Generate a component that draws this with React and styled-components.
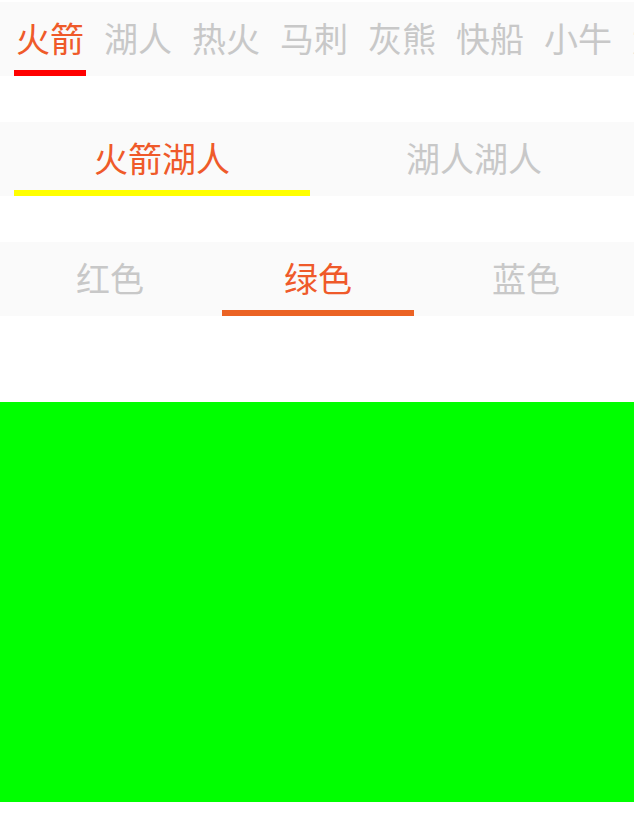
import { useState } from "react";
import styled, { createGlobalStyle } from "styled-components";

const GlobalStyle = createGlobalStyle`
  body {
    margin: 0;
    background: #ffffff;
    font-family: "Noto Sans CJK SC", "Noto Sans", sans-serif;
  }
`;

const teams = ["火箭", "湖人", "热火", "马刺", "灰熊", "快船", "小牛", "太阳"];
const pairs = ["火箭湖人", "湖人湖人"];
const colors = [
  { name: "红色", value: "#ff0000" },
  { name: "绿色", value: "#00ff00" },
  { name: "蓝色", value: "#0000ff" },
];

const Page = styled.div`
  display: flex;
  flex-direction: column;
  gap: 46px;
  padding-top: 2px;
  width: 634px;
  overflow: hidden;
`;

const TabBar = styled.div`
  display: flex;
  height: 74px;
  background: #fafafa;
  padding: 0 4px 0 6px;
  overflow: hidden;
  white-space: nowrap;
`;

const Tab = styled.div`
  flex: ${({ $scroll }) => ($scroll ? "0 0 auto" : "1 1 0")};
  display: flex;
  flex-direction: column;
  cursor: pointer;
`;

const Label = styled.div`
  flex: 1;
  display: flex;
  align-items: center;
  justify-content: center;
  padding: ${({ $scroll }) => ($scroll ? "4px 10px 0" : "4px 0 0")};
  font-size: 34px;
  line-height: 1;
  color: ${({ $active }) => ($active ? "#ef5a2a" : "#c8c8c8")};
`;

const Underline = styled.div`
  height: 6px;
  margin: 0 8px;
  background: ${({ $color }) => $color || "transparent"};
`;

const Swatch = styled.div`
  height: 400px;
  margin-top: 40px;
  background: ${({ $color }) => $color};
`;

export default function App() {
  const [team, setTeam] = useState(0);
  const [pair, setPair] = useState(0);
  const [color, setColor] = useState(1);

  return (
    <>
      <GlobalStyle />
      <Page>
        <TabBar>
          {teams.map((t, i) => (
            <Tab key={t} $scroll onClick={() => setTeam(i)}>
              <Label $scroll $active={i === team}>{t}</Label>
              <Underline $color={i === team ? "#ff0000" : null} />
            </Tab>
          ))}
        </TabBar>

        <TabBar>
          {pairs.map((p, i) => (
            <Tab key={i} onClick={() => setPair(i)}>
              <Label $active={i === pair}>{p}</Label>
              <Underline $color={i === pair ? "#ffff00" : null} />
            </Tab>
          ))}
        </TabBar>

        <TabBar>
          {colors.map((c, i) => (
            <Tab key={c.name} onClick={() => setColor(i)}>
              <Label $active={i === color}>{c.name}</Label>
              <Underline $color={i === color ? "#eb6324" : null} />
            </Tab>
          ))}
        </TabBar>

        <Swatch $color={colors[color].value} />
      </Page>
    </>
  );
}
